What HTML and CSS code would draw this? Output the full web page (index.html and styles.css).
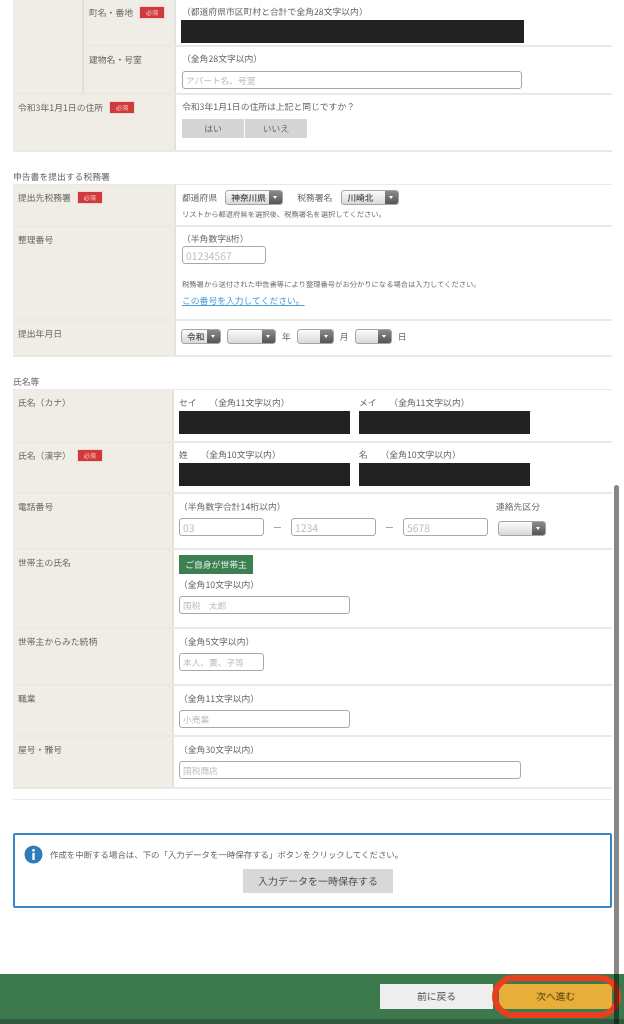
FILE: index.html
```html
<!DOCTYPE html>
<html lang="ja">
<head>
<meta charset="utf-8">
<title>申告書作成</title>
<link rel="stylesheet" href="styles.css">
</head>
<body>
<div class="page">
  <main class="content">
    <section class="table wide no-top">
      <div class="group">
        <div class="group-label"></div>
        <div class="group-rows">
          <div class="row h47">
            <div class="label sub"><span>町名・番地</span><span class="req">必須</span></div>
            <div class="cell">
              <p class="hint">（都道府県市区町村と合計で全角28文字以内）</p>
              <div class="mask w343 shift"></div>
            </div>
          </div>
          <div class="row h48">
            <div class="label sub"><span>建物名・号室</span></div>
            <div class="cell">
              <p class="hint">（全角28文字以内）</p>
              <div class="input w340 gap6">アパート名、号室</div>
            </div>
          </div>
        </div>
      </div>
      <div class="row h57">
        <div class="label"><span>令和3年1月1日の住所</span><span class="req">必須</span></div>
        <div class="cell">
          <p class="hint">令和3年1月1日の住所は上記と同じですか？</p>
          <div class="choices"><span class="choice">はい</span><span class="choice">いいえ</span></div>
        </div>
      </div>
    </section>

    <h2 class="heading">申告書を提出する税務署</h2>
    <section class="table wide">
      <div class="row h42">
        <div class="label"><span>提出先税務署</span><span class="req">必須</span></div>
        <div class="cell">
          <div class="line">
            <span class="line-text">都道府県</span>
            <span class="select s58"><span class="select-text">神奈川県</span><span class="arrow"></span></span>
            <span class="line-text ml14">税務署名</span>
            <span class="select s58"><span class="select-text">川崎北</span><span class="arrow"></span></span>
          </div>
          <p class="note mt4">リストから都道府県を選択後、税務署名を選択してください。</p>
        </div>
      </div>
      <div class="row h94">
        <div class="label"><span>整理番号</span></div>
        <div class="cell">
          <p class="hint">（半角数字8桁）</p>
          <div class="input w84 gap5 digits">01234567</div>
          <p class="note mt11">税務署から送付された申告書等により整理番号がお分かりになる場合は入力してください。</p>
          <p class="hint mt4"><a class="link" href="#">この番号を入力してください。</a></p>
        </div>
      </div>
      <div class="row h36">
        <div class="label"><span>提出年月日</span></div>
        <div class="cell">
          <div class="line date">
            <span class="select s40"><span class="select-text">令和</span><span class="arrow"></span></span>
            <span class="select s49"><span class="select-text"></span><span class="arrow"></span></span>
            <span class="line-text">年</span>
            <span class="select s37"><span class="select-text"></span><span class="arrow"></span></span>
            <span class="line-text">月</span>
            <span class="select s37"><span class="select-text"></span><span class="arrow"></span></span>
            <span class="line-text">日</span>
          </div>
        </div>
      </div>
    </section>

    <h2 class="heading">氏名等</h2>
    <section class="table narrow">
      <div class="row h53">
        <div class="label"><span>氏名（カナ）</span></div>
        <div class="cell">
          <div class="pair">
            <div><p class="hint">セイ　&nbsp;&nbsp;（全角11文字以内）</p><div class="mask w171"></div></div>
            <div><p class="hint">メイ　&nbsp;&nbsp;（全角11文字以内）</p><div class="mask w171"></div></div>
          </div>
        </div>
      </div>
      <div class="row h51">
        <div class="label"><span>氏名（漢字）</span><span class="req">必須</span></div>
        <div class="cell tight">
          <div class="pair">
            <div><p class="hint">姓　&nbsp;&nbsp;（全角10文字以内）</p><div class="mask w171"></div></div>
            <div><p class="hint">名　&nbsp;&nbsp;（全角10文字以内）</p><div class="mask w171"></div></div>
          </div>
        </div>
      </div>
      <div class="row h56">
        <div class="label"><span>電話番号</span></div>
        <div class="cell">
          <div class="phone-head"><p class="hint">（半角数字合計14桁以内）</p><p class="hint">連絡先区分</p></div>
          <div class="phone">
            <div class="input w85 digits">03</div><span class="dash">ー</span>
            <div class="input w85 digits">1234</div><span class="dash">ー</span>
            <div class="input w85 digits">5678</div>
            <span class="select s48"><span class="select-text"></span><span class="arrow"></span></span>
          </div>
        </div>
      </div>
      <div class="row h79">
        <div class="label"><span>世帯主の氏名</span></div>
        <div class="cell compact">
          <span class="self">ご自身が世帯主</span>
          <p class="hint mt5">（全角10文字以内）</p>
          <div class="input w171 gap6">国税　太郎</div>
        </div>
      </div>
      <div class="row h57">
        <div class="label"><span>世帯主からみた続柄</span></div>
        <div class="cell">
          <p class="hint">（全角5文字以内）</p>
          <div class="input w85 gap6">本人、妻、子等</div>
        </div>
      </div>
      <div class="row h51">
        <div class="label"><span>職業</span></div>
        <div class="cell">
          <p class="hint">（全角11文字以内）</p>
          <div class="input w171 gap6">小売業</div>
        </div>
      </div>
      <div class="row h52">
        <div class="label"><span>屋号・雅号</span></div>
        <div class="cell tight2">
          <p class="hint">（全角30文字以内）</p>
          <div class="input w342 gap6">国税商店</div>
        </div>
      </div>
    </section>
    <hr class="rule">

    <section class="info">
      <div class="info-line">
        <svg class="info-icon" viewBox="0 0 20 20" aria-hidden="true"><circle cx="10" cy="10" r="9.5" fill="#2f7cba"/><circle cx="10" cy="5.6" r="1.5" fill="#fff"/><rect x="8.8" y="8.2" width="2.4" height="7.6" fill="#fff"/></svg>
        <p class="info-text">作成を中断する場合は、下の「入力データを一時保存する」ボタンをクリックしてください。</p>
      </div>
      <div class="info-action"><span class="save">入力データを一時保存する</span></div>
    </section>
  </main>

  <footer class="footer">
    <span class="btn back">前に戻る</span>
    <span class="btn next">次へ進む</span>
    <span class="highlight"></span>
  </footer>
  <div class="scrollbar"></div>
</div>
</body>
</html>
```
FILE: styles.css
```css
* { box-sizing: border-box; }
html, body { margin: 0; padding: 0; background: #fff; }
body {
  font-family: "Noto Sans CJK JP", "Noto Sans", sans-serif;
  font-size: 8.8px;
  line-height: 12px;
  color: #666;
  text-rendering: geometricPrecision;
}
p { margin: 0; }
.page { position: relative; width: 624px; height: 1024px; overflow: hidden; filter: blur(0.35px); }
.content { padding: 0 12px 0 13px; }

.table { border-top: 1px solid #e9e9e7; }
.no-top { border-top: 0; }
.row { display: flex; border-bottom: 2px solid #e9e9e6; }
.h36 { min-height: 36px; }
.h42 { min-height: 42px; }
.h47 { min-height: 47px; }
.h48 { min-height: 48px; }
.h51 { min-height: 51px; }
.h52 { min-height: 52px; }
.h53 { min-height: 53px; }
.h56 { min-height: 56px; }
.h57 { min-height: 57px; }
.h79 { min-height: 79px; }
.h94 { min-height: 94px; }

.label {
  display: flex;
  align-self: stretch;
  align-items: flex-start;
  gap: 7px;
  background: #f0ede6;
  border-right: 2px solid #e3e2dd;
  padding: 7px 0 0 5px;
  flex: none;
}
.wide .label { width: 163px; }
.narrow .label { width: 161px; }
.wide .label.sub { width: 92px; }
.req {
  background: #d2393a;
  color: #f6cfcf;
  font-size: 6px;
  line-height: 11px;
  height: 11px;
  width: 24px;
  text-align: center;
  outline: 1px solid #f0d8d4;
}
.cell { flex: 1; padding: 6px 0 0 6px; min-width: 0; }
.narrow .cell { padding: 7px 0 0 5px; }
.narrow .cell.tight { padding-top: 6px; }
.narrow .cell.compact { padding-top: 5px; }
.narrow .cell.tight2 { padding-top: 7px; }
.narrow .gap6 { margin-top: 5px; }

.group { display: flex; }
.group-label { width: 71px; background: #f0ede6; border-right: 2px solid #e0dfd9; flex: none; border-bottom: 2px solid #e9e9e6; }
.group-rows { flex: 1; min-width: 0; }

.heading {
  margin: 0;
  padding-top: 19px;
  height: 32px;
  font-size: 8.8px;
  line-height: 12px;
  font-weight: 400;
}

.mask { background: #222; height: 23px; margin-top: 2px; }
.shift { margin-left: -1px; }
.w171 { width: 171px; }
.w343 { width: 343px; }

.input {
  height: 18px;
  border: 1px solid #a8a8a8;
  border-radius: 3px;
  color: #bdbdbd;
  padding-left: 3px;
  font-size: 8.7px;
  line-height: 17px;
  background: #fff;
}
.digits { font-size: 10.3px; }
.w84 { width: 84px; }
.w85 { width: 85px; }
.w340 { width: 340px; }
.w342 { width: 342px; }
.gap5 { margin-top: 1px; }
.gap6 { margin-top: 6px; }

.hint { line-height: 12px; }
.note { font-size: 7.3px; line-height: 12px; color: #6e6e6e; }
.mt4 { margin-top: 4px; }
.mt5 { margin-top: 5px; }
.mt11 { margin-top: 15px; }
.link { color: #4a9bd6; text-decoration: underline; }

.choices { display: flex; gap: 1px; margin-top: 6px; }
.choice {
  width: 62px;
  height: 19px;
  background: #d5d5d5;
  text-align: center;
  line-height: 19px;
}

.line { display: flex; align-items: center; height: 15px; margin-top: -1px; }
.line-text { margin-right: 8px; }
.ml14 { margin-left: 14px; margin-right: 9px; }
.date { margin-top: 2px; margin-left: -1px; gap: 6px; }
.date .line-text { margin: 0; }

.select {
  display: inline-flex;
  height: 15px;
  border: 1px solid #a5a5a5;
  border-radius: 3px;
  overflow: hidden;
  background: linear-gradient(#fbfbfb, #d9d9d9);
  flex: none;
}
.select-text {
  flex: 1;
  font-weight: 500;
  color: #444;
  font-size: 8.7px;
  line-height: 13px;
  padding-left: 5px;
}
.arrow {
  position: relative;
  width: 13px;
  background: linear-gradient(#8a8a8a, #555);
  flex: none;
}
.arrow::after {
  content: "";
  position: absolute;
  left: 4px;
  top: 5px;
  border: 2.5px solid transparent;
  border-top: 3px solid #fff;
  border-bottom: 0;
}
.s37 { width: 37px; }
.s40 { width: 40px; }
.s48 { width: 48px; }
.s49 { width: 49px; }
.s58 { width: 58px; }

.pair { display: flex; gap: 9px; }
.phone-head { display: flex; justify-content: space-between; padding-right: 72px; }
.phone { display: flex; align-items: flex-start; margin-top: 5px; }
.dash { width: 27px; text-align: center; line-height: 20px; color: #8a8a8a; }
.phone .select { margin: 3px 0 0 10px; }

.self {
  display: block;
  width: 74px;
  height: 19px;
  background: #3c7f50;
  color: #e6efe8;
  text-align: center;
  line-height: 19px;
}

.rule { margin: 10px 0 0; border: 0; border-top: 1px solid #e9e9e7; height: 1px; }

.info {
  margin-top: 33px;
  height: 75px;
  border: 2px solid #3a86c4;
  border-radius: 2px;
  padding: 10px 9px 0;
}
.info-line { display: flex; align-items: center; gap: 7px; }
.info-icon { width: 19px; height: 19px; flex: none; }
.info-text { font-size: 8.44px; }
.info-action { display: flex; justify-content: center; margin-top: 5px; padding-left: 11px; }
.save {
  width: 150px;
  height: 24px;
  background: #d8d8d8;
  text-align: center;
  line-height: 24px;
  font-size: 10px;
  color: #4e4e4e;
}

.footer {
  position: relative;
  margin-top: 66px;
  height: 50px;
  background: #3c7a4e;
  border-bottom: 5px solid #2f5a3b;
  display: flex;
  justify-content: flex-end;
  gap: 6px;
  padding: 10px 12px 0 0;
}
.btn {
  width: 113px;
  height: 25px;
  text-align: center;
  line-height: 25px;
  font-size: 9.8px;
}
.back { background: #eee; color: #555; }
.next { background: #e8ae3a; color: #5c4210; }
.highlight {
  position: absolute;
  left: 492px;
  top: 1px;
  width: 129px;
  height: 43px;
  border: 6px solid #e8401f;
  border-radius: 22px;
}
.scrollbar {
  position: absolute;
  left: 614px;
  top: 485px;
  bottom: 0;
  width: 5px;
  border-radius: 3px 3px 0 0;
  background: rgba(0, 0, 0, 0.47);
}
```
